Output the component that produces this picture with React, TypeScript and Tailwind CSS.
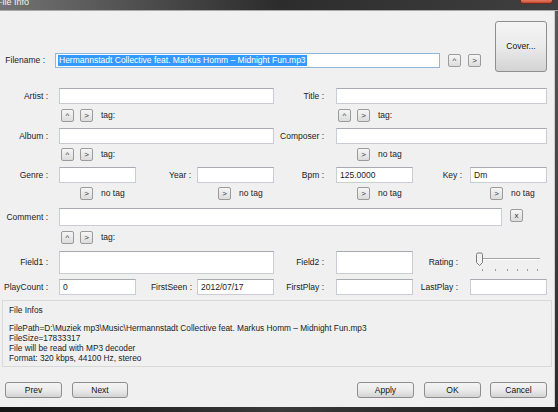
type FieldProps = {
  className: string;
  value?: string;
};

function Field({ className, value }: FieldProps) {
  return (
    <div
      className={`flex items-center border border-[#c9ccd2] border-t-[#a7aab0] bg-white pl-[3px] text-[8.5px] leading-none text-[#1b1b1b] ${className}`}
    >
      {value}
    </div>
  );
}

type LabelProps = {
  text: string;
  className: string;
};

function Label({ text, className }: LabelProps) {
  return (
    <span
      className={`whitespace-nowrap text-right text-[8.5px] leading-none text-[#1b1b1b] ${className}`}
    >
      {text}
    </span>
  );
}

type MiniButtonProps = {
  label: string;
  className?: string;
};

function MiniButton({ label, className = "" }: MiniButtonProps) {
  return (
    <button
      className={`flex h-[13px] w-[13px] shrink-0 items-center justify-center rounded-[2px] border border-[#9b9b9b] bg-gradient-to-b from-[#f6f6f6] to-[#dcdcdc] text-[8px] leading-none text-[#333] ${className}`}
      type="button"
    >
      {label}
    </button>
  );
}

function PushButton({ label, className = "" }: MiniButtonProps) {
  return (
    <button
      className={`flex h-[16px] items-center justify-center rounded-[3px] border border-[#8e8e8e] bg-gradient-to-b from-[#f4f4f4] via-[#ebebeb] to-[#d3d3d3] text-[8.5px] leading-none text-[#111] ${className}`}
      type="button"
    >
      {label}
    </button>
  );
}

function TagNote({ text }: { text: string }) {
  return (
    <span className="ml-[8px] whitespace-nowrap text-[8.5px] leading-none text-[#1b1b1b]">
      {text}
    </span>
  );
}

function RatingSlider() {
  return (
    <svg className="ml-[17px]" height="23" viewBox="0 0 66 23" width="66">
      <line stroke="#a4a4a4" x1="7" x2="65" y1="7.5" y2="7.5" />
      <line stroke="#ffffff" x1="7" x2="65" y1="8.5" y2="8.5" />
      {[7, 20, 32, 42, 52, 62].map((x) => (
        <line key={x} stroke="#9a9a9a" x1={x + 0.5} x2={x + 0.5} y1="18" y2="20" />
      ))}
      <path
        d="M1.5 3.5 Q1.5 2 3 2 L6 2 Q7.5 2 7.5 3.5 L7.5 11.5 L4.5 14.5 L1.5 11.5 Z"
        fill="#f2f2f2"
        stroke="#7d7d7d"
      />
    </svg>
  );
}

export default function App() {
  return (
    <div className="flex h-[412px] w-[558px] flex-col overflow-hidden bg-[#202020] font-['Liberation_Sans',Arial,sans-serif]">
      <div className="flex h-[10px] shrink-0 items-start overflow-hidden bg-gradient-to-r from-[#747474] via-[#2c2c2c] to-[#404040]">
        <span className="-ml-[3px] -mt-[3px] text-[9px] leading-[10px] text-[#f4f4f4]">
          File Info
        </span>
        <div className="ml-auto mr-[5px] h-[4px] w-[33px] rounded-b-[3px] border border-t-0 border-[#6b2a20] bg-gradient-to-b from-[#e47d64] to-[#c6432b]" />
      </div>
      <div className="h-[1px] shrink-0 bg-[#a9a9a9]" />

      <div className="flex flex-1">
        <div className="flex w-[554px] flex-col bg-[#f0f0f0]">
          {/* filename + cover */}
          <div className="flex h-[77px] items-start">
            <div className="flex items-center pt-[42px]">
              <Label className="w-[45px]" text="Filename :" />
              <div className="ml-[10px] flex h-[15px] w-[385px] items-center border border-[#8fb6dc] bg-white pl-[2px]">
                <span className="whitespace-nowrap bg-[#3399ff] px-[1px] text-[8.5px] leading-[11px] text-white">
                  Hermannstadt Collective feat. Markus Homm – Midnight Fun.mp3
                </span>
              </div>
              <MiniButton className="ml-[8px]" label="^" />
              <MiniButton className="ml-[7px]" label=">" />
            </div>
            <PushButton className="ml-[14px] mt-[10px] h-[51px] w-[52px]" label="Cover..." />
          </div>

          {/* artist / title */}
          <div className="flex h-[16px] items-center">
            <Label className="w-[48px]" text="Artist :" />
            <Field className="ml-[11px] h-[16px] w-[215px]" />
            <Label className="ml-[4px] w-[46px]" text="Title :" />
            <Field className="ml-[12px] h-[16px] w-[211px]" />
          </div>
          <div className="mt-[5px] flex h-[13px] items-center">
            <div className="flex w-[278px] items-center pl-[61px]">
              <MiniButton label="^" />
              <MiniButton className="ml-[6px]" label=">" />
              <TagNote text="tag:" />
            </div>
            <div className="flex items-center pl-[60px]">
              <MiniButton label="^" />
              <MiniButton className="ml-[6px]" label=">" />
              <TagNote text="tag:" />
            </div>
          </div>

          {/* album / composer */}
          <div className="mt-[6px] flex h-[16px] items-center">
            <Label className="w-[48px]" text="Album :" />
            <Field className="ml-[11px] h-[16px] w-[215px]" />
            <Label className="ml-[4px] w-[46px]" text="Composer :" />
            <Field className="ml-[12px] h-[16px] w-[211px]" />
          </div>
          <div className="mt-[4px] flex h-[13px] items-center">
            <div className="flex w-[278px] items-center pl-[61px]">
              <MiniButton label="^" />
              <MiniButton className="ml-[6px]" label=">" />
              <TagNote text="tag:" />
            </div>
            <div className="flex items-center pl-[79px]">
              <MiniButton label=">" />
              <TagNote text="no tag" />
            </div>
          </div>

          {/* genre / year / bpm / key */}
          <div className="mt-[6px] flex h-[16px] items-center">
            <Label className="w-[48px]" text="Genre :" />
            <Field className="ml-[11px] h-[16px] w-[77px]" />
            <Label className="w-[55px]" text="Year :" />
            <Field className="ml-[6px] h-[16px] w-[77px]" />
            <Label className="ml-[4px] w-[46px]" text="Bpm :" />
            <Field className="ml-[12px] h-[16px] w-[77px]" value="125.0000" />
            <Label className="w-[49px]" text="Key :" />
            <Field className="ml-[8px] h-[16px] w-[77px]" value="Dm" />
          </div>
          <div className="mt-[4px] flex h-[13px] items-center">
            <div className="flex w-[136px] items-center pl-[80px]">
              <MiniButton label=">" />
              <TagNote text="no tag" />
            </div>
            <div className="flex w-[142px] items-center pl-[82px]">
              <MiniButton label=">" />
              <TagNote text="no tag" />
            </div>
            <div className="flex w-[135px] items-center pl-[79px]">
              <MiniButton label=">" />
              <TagNote text="no tag" />
            </div>
            <div className="flex items-center pl-[77px]">
              <MiniButton label=">" />
              <TagNote text="no tag" />
            </div>
          </div>

          {/* comment */}
          <div className="mt-[8px] flex h-[18px] items-start">
            <Label className="mt-[5px] w-[48px]" text="Comment :" />
            <Field className="ml-[11px] h-[18px] w-[443px]" />
            <MiniButton className="ml-[8px] mt-[1px]" label="x" />
          </div>
          <div className="mt-[5px] flex h-[13px] items-center pl-[61px]">
            <MiniButton label="^" />
            <MiniButton className="ml-[6px]" label=">" />
            <TagNote text="tag:" />
          </div>

          {/* field1 / field2 / rating */}
          <div className="mt-[7px] flex h-[23px] items-center">
            <Label className="w-[48px]" text="Field1 :" />
            <Field className="ml-[11px] h-[23px] w-[215px]" />
            <Label className="ml-[4px] w-[46px]" text="Field2 :" />
            <Field className="ml-[12px] h-[23px] w-[77px]" />
            <Label className="w-[45px]" text="Rating :" />
            <RatingSlider />
          </div>

          {/* play counts */}
          <div className="mt-[5px] flex h-[16px] items-center">
            <Label className="w-[48px]" text="PlayCount :" />
            <Field className="ml-[11px] h-[16px] w-[77px]" value="0" />
            <Label className="w-[56px]" text="FirstSeen :" />
            <Field className="ml-[5px] h-[16px] w-[77px]" value="2012/07/17" />
            <Label className="ml-[4px] w-[46px]" text="FirstPlay :" />
            <Field className="ml-[12px] h-[16px] w-[77px]" />
            <Label className="w-[45px]" text="LastPlay :" />
            <Field className="ml-[12px] h-[16px] w-[77px]" />
          </div>

          {/* file infos */}
          <div className="mx-[2px] mt-[5px] flex h-[67px] flex-col border border-[#d9d9d9] pl-[6px] pt-[4px] text-[8.3px] leading-[10px] text-[#1b1b1b]">
            <span>File Infos</span>
            <div className="mt-[8px] flex flex-col whitespace-nowrap">
              <span>
                FilePath=D:\Muziek mp3\Music\Hermannstadt Collective feat. Markus Homm – Midnight Fun.mp3
              </span>
              <span>FileSize=17833317</span>
              <span>File will be read with MP3 decoder</span>
              <span>Format: 320 kbps, 44100 Hz, stereo</span>
            </div>
          </div>

          {/* footer buttons */}
          <div className="mt-[15px] flex items-center">
            <PushButton className="ml-[5px] w-[57px]" label="Prev" />
            <PushButton className="ml-[10px] w-[56px]" label="Next" />
            <PushButton className="ml-auto w-[57px]" label="Apply" />
            <PushButton className="ml-[10px] w-[57px]" label="OK" />
            <PushButton className="ml-[9px] mr-[7px] w-[57px]" label="Cancel" />
          </div>
        </div>
        <div className="flex-1 border-l border-[#cfcfcf] bg-gradient-to-b from-[#5a5a5a] to-[#2a2a2a]" />
      </div>
      <div className="h-[5px] shrink-0 bg-gradient-to-r from-[#151515] via-[#3a3a3a] to-[#1c1c1c]" />
    </div>
  );
}
